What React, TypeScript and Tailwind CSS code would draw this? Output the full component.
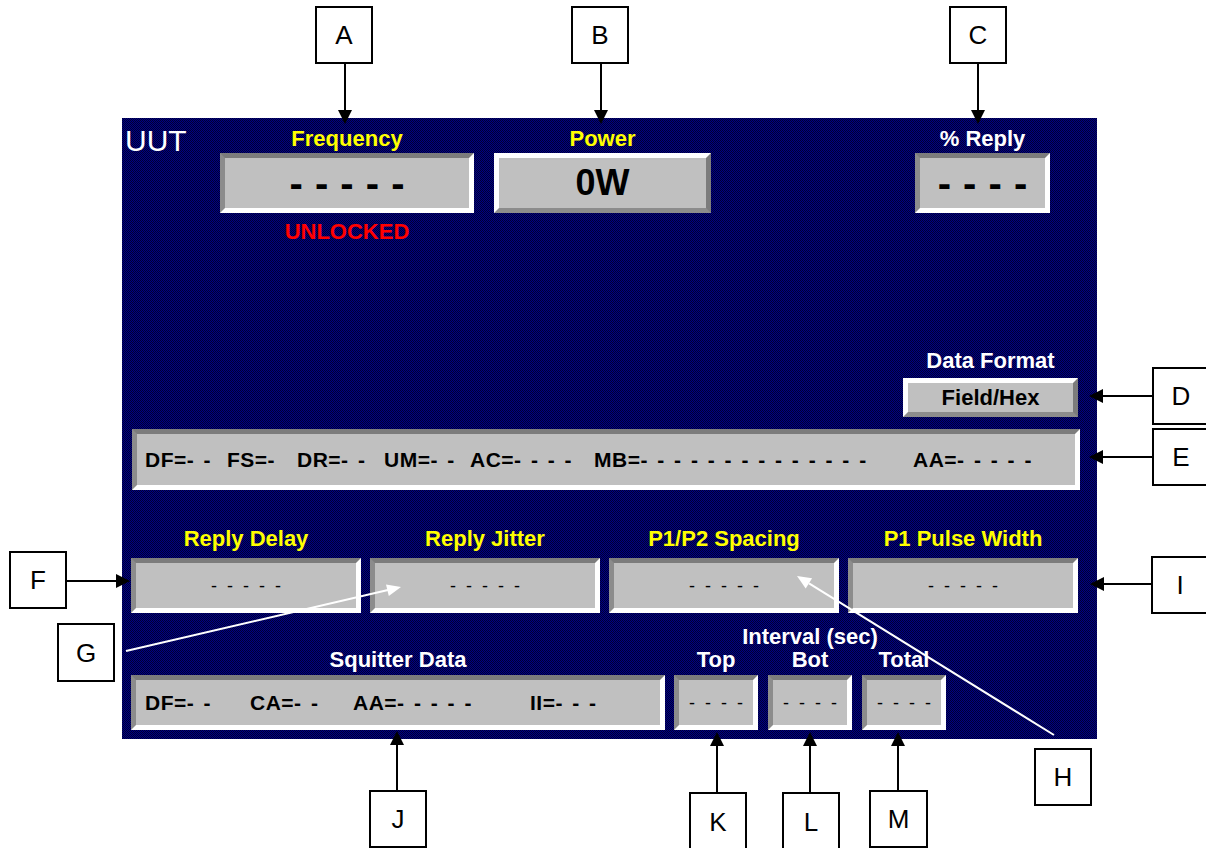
import React from "react";

const INSET =
  "bg-[#c0c0c0] border-[5px] border-solid border-t-[#7c7c7c] border-l-[#8c8c8c] border-r-white border-b-white flex items-center justify-center";
const OUTSET =
  "bg-[#c0c0c0] border-[5px] border-solid border-t-white border-l-white border-r-[#7c7c7c] border-b-[#8c8c8c] flex items-center justify-center";

function Label({ children, color }: { children: React.ReactNode; color: "y" | "w" | "r" }) {
  const c = color === "y" ? "text-[#ffff00]" : color === "w" ? "text-white" : "text-[#ff0000]";
  return <div className={`text-[22px] leading-none font-bold whitespace-nowrap ${c}`}>{children}</div>;
}

function SmallDashes({ n }: { n: number }) {
  return (
    <span className="text-[18px] leading-none text-black [word-spacing:5px] whitespace-pre">
      {Array.from({ length: n }, () => "-").join(" ")}
    </span>
  );
}

function BigDashes({ n }: { n: number }) {
  return (
    <span className="text-[40px] leading-none font-bold text-black [word-spacing:1px] whitespace-pre">
      {Array.from({ length: n }, () => "-").join(" ")}
    </span>
  );
}

function Panel() {
  return (
    <div className="w-[975px] h-[621px] flex flex-col pt-[10px] bg-[repeating-conic-gradient(#000086_0%_25%,#000032_0%_50%)] [background-size:2px_2px]">
      {/* Row 1 */}
      <div className="flex items-start">
        <div className="w-[98px] pl-[3px] -mt-[2px] text-white text-[30px] leading-none">UUT</div>
        <div className="w-[254px] flex flex-col items-center">
          <Label color="y">Frequency</Label>
          <div className={`mt-[3px] w-full h-[60px] ${INSET}`}>
            <BigDashes n={5} />
          </div>
          <div className="mt-[8px]">
            <Label color="r">UNLOCKED</Label>
          </div>
        </div>
        <div className="ml-[20px] w-[217px] flex flex-col items-center">
          <Label color="y">Power</Label>
          <div className={`mt-[3px] w-full h-[60px] ${OUTSET}`}>
            <span className="text-[36px] leading-none font-bold text-black">0W</span>
          </div>
        </div>
        <div className="ml-[204px] w-[135px] flex flex-col items-center">
          <Label color="w">% Reply</Label>
          <div className={`mt-[3px] w-full h-[60px] ${INSET}`}>
            <BigDashes n={4} />
          </div>
        </div>
      </div>

      {/* Data format */}
      <div className="mt-[107px] self-end mr-[19px] w-[175px] flex flex-col items-center">
        <Label color="w">Data Format</Label>
        <div className={`mt-[6px] w-full h-[39px] ${OUTSET}`}>
          <span className="text-[22px] leading-none font-bold text-black">Field/Hex</span>
        </div>
      </div>

      {/* Reply data */}
      <div className="mt-[12px] ml-[10px] w-[948px] h-[61px] bg-[#c0c0c0] border-[5px] border-solid border-t-[#7c7c7c] border-l-[#8c8c8c] border-r-white border-b-white flex items-center pl-[8px]">
        <div className="flex items-center text-[21px] leading-none font-bold tracking-[0.5px] text-black [word-spacing:3px] whitespace-pre">
          <span className="w-[82px] shrink-0">DF=- -</span>
          <span className="w-[70px] shrink-0">FS=-</span>
          <span className="w-[87px] shrink-0">DR=- -</span>
          <span className="w-[86px] shrink-0">UM=- -</span>
          <span className="w-[124px] shrink-0">AC=- - - -</span>
          <span className="w-[319px] shrink-0">MB=- - - - - - - - - - - - - -</span>
          <span className="shrink-0">AA=- - - - -</span>
        </div>
      </div>

      {/* Timing row */}
      <div className="mt-[38px] ml-[9px] flex gap-[9px]">
        {["Reply Delay", "Reply Jitter", "P1/P2 Spacing", "P1 Pulse Width"].map((t) => (
          <div key={t} className="w-[230px] flex flex-col items-center">
            <Label color="y">{t}</Label>
            <div className={`mt-[8px] w-full h-[55px] ${INSET}`}>
              <SmallDashes n={5} />
            </div>
          </div>
        ))}
      </div>

      {/* Squitter row */}
      <div className="mt-[13px] ml-[9px] flex items-end">
        <div className="w-[534px] flex flex-col items-center">
          <Label color="w">Squitter Data</Label>
          <div className="mt-[4px] w-full h-[55px] bg-[#c0c0c0] border-[5px] border-solid border-t-[#7c7c7c] border-l-[#8c8c8c] border-r-white border-b-white flex items-center pl-[9px]">
            <div className="flex items-center text-[21px] leading-none font-bold tracking-[0.5px] text-black [word-spacing:3px] whitespace-pre">
              <span className="w-[105px] shrink-0">DF=- -</span>
              <span className="w-[103px] shrink-0">CA=- -</span>
              <span className="w-[177px] shrink-0">AA=- - - - -</span>
              <span className="shrink-0">II=- - -</span>
            </div>
          </div>
        </div>
        <div className="ml-[9px] w-[272px] flex flex-col items-center">
          <Label color="w">Interval (sec)</Label>
          <div className="mt-[1px] w-full flex gap-[10px]">
            {["Top", "Bot", "Total"].map((t) => (
              <div key={t} className="w-[84px] flex justify-center">
                <Label color="w">{t}</Label>
              </div>
            ))}
          </div>
          <div className="mt-[4px] w-full flex gap-[10px]">
            {[0, 1, 2].map((i) => (
              <div key={i} className={`w-[84px] h-[55px] ${INSET}`}>
                <SmallDashes n={4} />
              </div>
            ))}
          </div>
        </div>
      </div>
    </div>
  );
}

function Callout({ letter, className }: { letter: string; className: string }) {
  return (
    <div
      className={`absolute border-2 border-solid border-black bg-white flex items-center justify-center text-[26px] leading-none text-black ${className}`}
    >
      {letter}
    </div>
  );
}

function Overlay() {
  return (
    <>
      <svg
        className="absolute left-0 top-0 pointer-events-none"
        width="1206"
        height="848"
        viewBox="0 0 1206 848"
      >
        <g stroke="#000" strokeWidth="2" fill="#000">
          <line x1="345" y1="64" x2="345" y2="111" />
          <polygon points="338,110 352,110 345,124" stroke="none" />
          <line x1="601" y1="64" x2="601" y2="111" />
          <polygon points="594,110 608,110 601,124" stroke="none" />
          <line x1="978" y1="64" x2="978" y2="111" />
          <polygon points="971,110 985,110 978,124" stroke="none" />
          <line x1="1152" y1="396" x2="1102" y2="396" />
          <polygon points="1103,389 1103,403 1089,396" stroke="none" />
          <line x1="1152" y1="457" x2="1102" y2="457" />
          <polygon points="1103,450 1103,464 1089,457" stroke="none" />
          <line x1="1151" y1="584" x2="1103" y2="584" />
          <polygon points="1104,577 1104,591 1090,584" stroke="none" />
          <line x1="67" y1="581" x2="117" y2="581" />
          <polygon points="116,574 116,588 130,581" stroke="none" />
          <line x1="397" y1="790" x2="397" y2="744" />
          <polygon points="390,745 404,745 397,731" stroke="none" />
          <line x1="717" y1="792" x2="717" y2="745" />
          <polygon points="710,746 724,746 717,732" stroke="none" />
          <line x1="810" y1="792" x2="810" y2="745" />
          <polygon points="803,746 817,746 810,732" stroke="none" />
          <line x1="898" y1="791" x2="898" y2="745" />
          <polygon points="891,746 905,746 898,732" stroke="none" />
        </g>
        <g stroke="#fff" strokeWidth="2" fill="#fff">
          <line x1="126" y1="651" x2="388" y2="590" />
          <polygon points="388.8,596 386,584.4 401,587" stroke="none" />
          <line x1="1054" y1="735" x2="809" y2="583.4" />
          <polygon points="812.1,578.3 805.7,588.5 797,576" stroke="none" />
        </g>
      </svg>
      <Callout letter="A" className="left-[315px] top-[6px] w-[58px] h-[58px]" />
      <Callout letter="B" className="left-[571px] top-[6px] w-[58px] h-[58px]" />
      <Callout letter="C" className="left-[949px] top-[6px] w-[58px] h-[58px]" />
      <Callout letter="D" className="left-[1152px] top-[367px] w-[58px] h-[58px]" />
      <Callout letter="E" className="left-[1152px] top-[428px] w-[58px] h-[58px]" />
      <Callout letter="F" className="left-[9px] top-[551px] w-[58px] h-[58px]" />
      <Callout letter="G" className="left-[57px] top-[623px] w-[58px] h-[59px]" />
      <Callout letter="H" className="left-[1034px] top-[748px] w-[58px] h-[58px]" />
      <Callout letter="I" className="left-[1151px] top-[556px] w-[58px] h-[58px]" />
      <Callout letter="J" className="left-[369px] top-[790px] w-[58px] h-[58px]" />
      <Callout letter="K" className="left-[689px] top-[792px] w-[58px] h-[60px]" />
      <Callout letter="L" className="left-[782px] top-[792px] w-[58px] h-[60px]" />
      <Callout letter="M" className="left-[869px] top-[790px] w-[59px] h-[58px]" />
    </>
  );
}

export default function App() {
  return (
    <div className="relative w-[1206px] h-[848px] overflow-hidden bg-white font-['Liberation_Sans',Arial,Helvetica,sans-serif] pt-[118px] pl-[122px]">
      <Panel />
      <Overlay />
    </div>
  );
}
